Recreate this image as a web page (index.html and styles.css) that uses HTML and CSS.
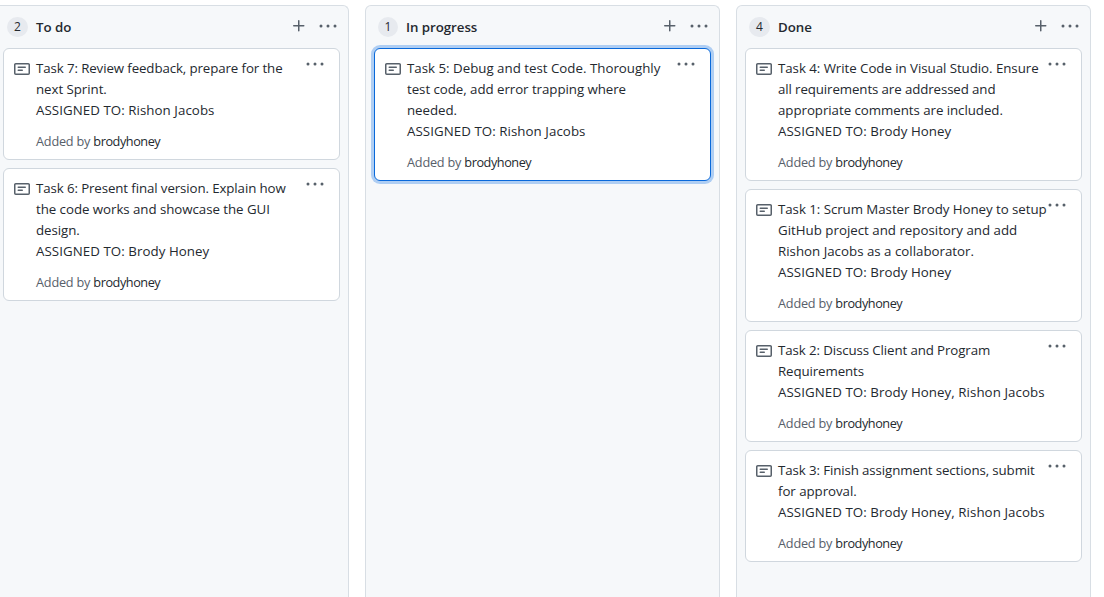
FILE: index.html
```html
<!DOCTYPE html>
<html lang="en">
<head>
<meta charset="utf-8">
<title>Project board</title>
<link rel="stylesheet" href="styles.css">
</head>
<body>
<svg width="0" height="0" class="sprite">
  <symbol id="note" viewBox="0 0 16 16"><path fill-rule="evenodd" d="M0 3.75C0 2.784.784 2 1.75 2h12.5c.966 0 1.75.784 1.75 1.75v8.5A1.75 1.75 0 0114.25 14H1.75A1.75 1.75 0 010 12.25v-8.5zm1.75-.25a.25.25 0 00-.25.25v8.5c0 .138.112.25.25.25h12.5a.25.25 0 00.25-.25v-8.5a.25.25 0 00-.25-.25H1.75zM3.5 6.25a.75.75 0 01.75-.75h7a.75.75 0 010 1.5h-7a.75.75 0 01-.75-.75zm.75 2.25a.75.75 0 000 1.5h4a.75.75 0 000-1.5h-4z"/></symbol>
  <symbol id="plus" viewBox="0 0 16 16"><path d="M7.75 2a.75.75 0 01.75.75V7h4.25a.75.75 0 110 1.5H8.5v4.25a.75.75 0 11-1.5 0V8.5H2.75a.75.75 0 010-1.5H7V2.75A.75.75 0 017.75 2z"/></symbol>
  <symbol id="dots" viewBox="0 0 18 4"><circle cx="2" cy="2" r="1.5"/><circle cx="9" cy="2" r="1.5"/><circle cx="16" cy="2" r="1.5"/></symbol>
</svg>
<main class="board">
  <section class="column">
    <header class="head"><span class="count wide">2</span><h3>To do</h3><svg class="plus"><use href="#plus"/></svg><svg class="dots"><use href="#dots"/></svg></header>
    <div class="cards">
      <article class="card"><svg class="note"><use href="#note"/></svg><div class="body"><p><span class="tight">Task 7: Review feedback, prepare for the</span><br>next Sprint.<br><span class="assigned">ASSIGNED TO: Rishon Jacobs</span></p><small>Added by <a>brodyhoney</a></small></div><svg class="dots"><use href="#dots"/></svg></article>
      <article class="card"><svg class="note"><use href="#note"/></svg><div class="body"><p><span class="tight">Task 6: Present final version. Explain how</span><br>the code works and showcase the GUI<br>design.<br><span class="assigned">ASSIGNED TO: Brody Honey</span></p><small>Added by <a>brodyhoney</a></small></div><svg class="dots"><use href="#dots"/></svg></article>
    </div>
  </section>
  <section class="column">
    <header class="head"><span class="count">1</span><h3>In progress</h3><svg class="plus"><use href="#plus"/></svg><svg class="dots"><use href="#dots"/></svg></header>
    <div class="cards">
      <article class="card focused"><svg class="note"><use href="#note"/></svg><div class="body"><p><span class="even">Task 5: Debug and test Code. Thoroughly</span><br>test code, add error trapping where<br>needed.<br><span class="assigned">ASSIGNED TO: Rishon Jacobs</span></p><small>Added by <a>brodyhoney</a></small></div><svg class="dots"><use href="#dots"/></svg></article>
    </div>
  </section>
  <section class="column">
    <header class="head"><span class="count wide">4</span><h3>Done</h3><svg class="plus"><use href="#plus"/></svg><svg class="dots"><use href="#dots"/></svg></header>
    <div class="cards">
      <article class="card"><svg class="note"><use href="#note"/></svg><div class="body"><p>Task 4: Write Code in Visual Studio. Ensure<br><span class="tight">all requirements are addressed and</span><br>appropriate comments are included.<br><span class="assigned">ASSIGNED TO: Brody Honey</span></p><small>Added by <a>brodyhoney</a></small></div><svg class="dots"><use href="#dots"/></svg></article>
      <article class="card"><svg class="note"><use href="#note"/></svg><div class="body"><p>Task 1: Scrum Master Brody Honey to setup<br><span class="even">GitHub project and repository and add</span><br><span class="even">Rishon Jacobs as a collaborator.</span><br><span class="assigned">ASSIGNED TO: Brody Honey</span></p><small>Added by <a>brodyhoney</a></small></div><svg class="dots"><use href="#dots"/></svg></article>
      <article class="card"><svg class="note"><use href="#note"/></svg><div class="body"><p><span class="tight">Task 2: Discuss Client and Program</span><br><span class="tight">Requirements</span><br><span class="assigned">ASSIGNED TO: Brody Honey, Rishon Jacobs</span></p><small>Added by <a>brodyhoney</a></small></div><svg class="dots"><use href="#dots"/></svg></article>
      <article class="card"><svg class="note"><use href="#note"/></svg><div class="body"><p><span class="tight">Task 3: Finish assignment sections, submit</span><br>for approval.<br><span class="assigned">ASSIGNED TO: Brody Honey, Rishon Jacobs</span></p><small>Added by <a>brodyhoney</a></small></div><svg class="dots"><use href="#dots"/></svg></article>
    </div>
  </section>
</main>
</body>
</html>
```
FILE: styles.css
```css
* { box-sizing: border-box; }
body {
  margin: 0;
  height: 597px;
  overflow: hidden;
  background: #fff;
  color: #24292f;
  font: 13.3px/21px "Open Sans", "Noto Sans", sans-serif;
}
.sprite { display: none; }
svg { flex: none; fill: #57606a; }
.board {
  display: flex;
  gap: 16px;
  height: 597px;
  margin-left: -6px;
  padding-top: 5px;
}
.column {
  flex: 0 0 355px;
  border: 1px solid #d8dee4;
  border-bottom: 0;
  border-radius: 6px 6px 0 0;
  background: #f6f8fa;
}
.head {
  display: flex;
  align-items: center;
  height: 42px;
  padding: 0 11px 0 12px;
}
.count {
  width: 20px;
  height: 20px;
  margin-right: 8px;
  border-radius: 10px;
  background: #e7eaef;
  font-size: 12px;
  font-weight: 500;
  line-height: 20px;
  text-align: center;
}
.count.wide { width: 21px; }
.head h3 {
  flex: 1;
  margin: 0;
  font-size: 13.3px;
  font-weight: 600;
  letter-spacing: -0.05px;
}
.plus { width: 16px; height: 16px; margin-right: 12px; }
.dots { width: 18px; height: 4px; }
.head .dots, .head .plus { margin-bottom: 2px; }
.cards {
  display: flex;
  flex-direction: column;
  gap: 8px;
  padding: 0 8px;
}
.card {
  display: flex;
  align-items: flex-start;
  padding: 9px 15px 8px 10px;
  border: 1px solid #d0d7de;
  border-radius: 6px;
  background: #fff;
}
.card.focused {
  border-color: #0969da;
  box-shadow: 0 0 0 3px #afcef3;
}
.note { width: 16px; height: 16px; margin: 3px 6px 0 0; }
.body { flex: 1; min-width: 0; white-space: nowrap; }
.body p { margin: 0 0 10px; letter-spacing: -0.05px; }
.body .tight { letter-spacing: -0.11px; }
.body .even { letter-spacing: 0; }
.body .assigned { letter-spacing: 0.06px; }
.body small {
  display: block;
  color: #57606a;
  font-size: 12.7px;
  letter-spacing: -0.2px;
  line-height: 20px;
}
.body a { color: #24292f; letter-spacing: -0.45px; }
.card .dots { margin-top: 4px; }
```
